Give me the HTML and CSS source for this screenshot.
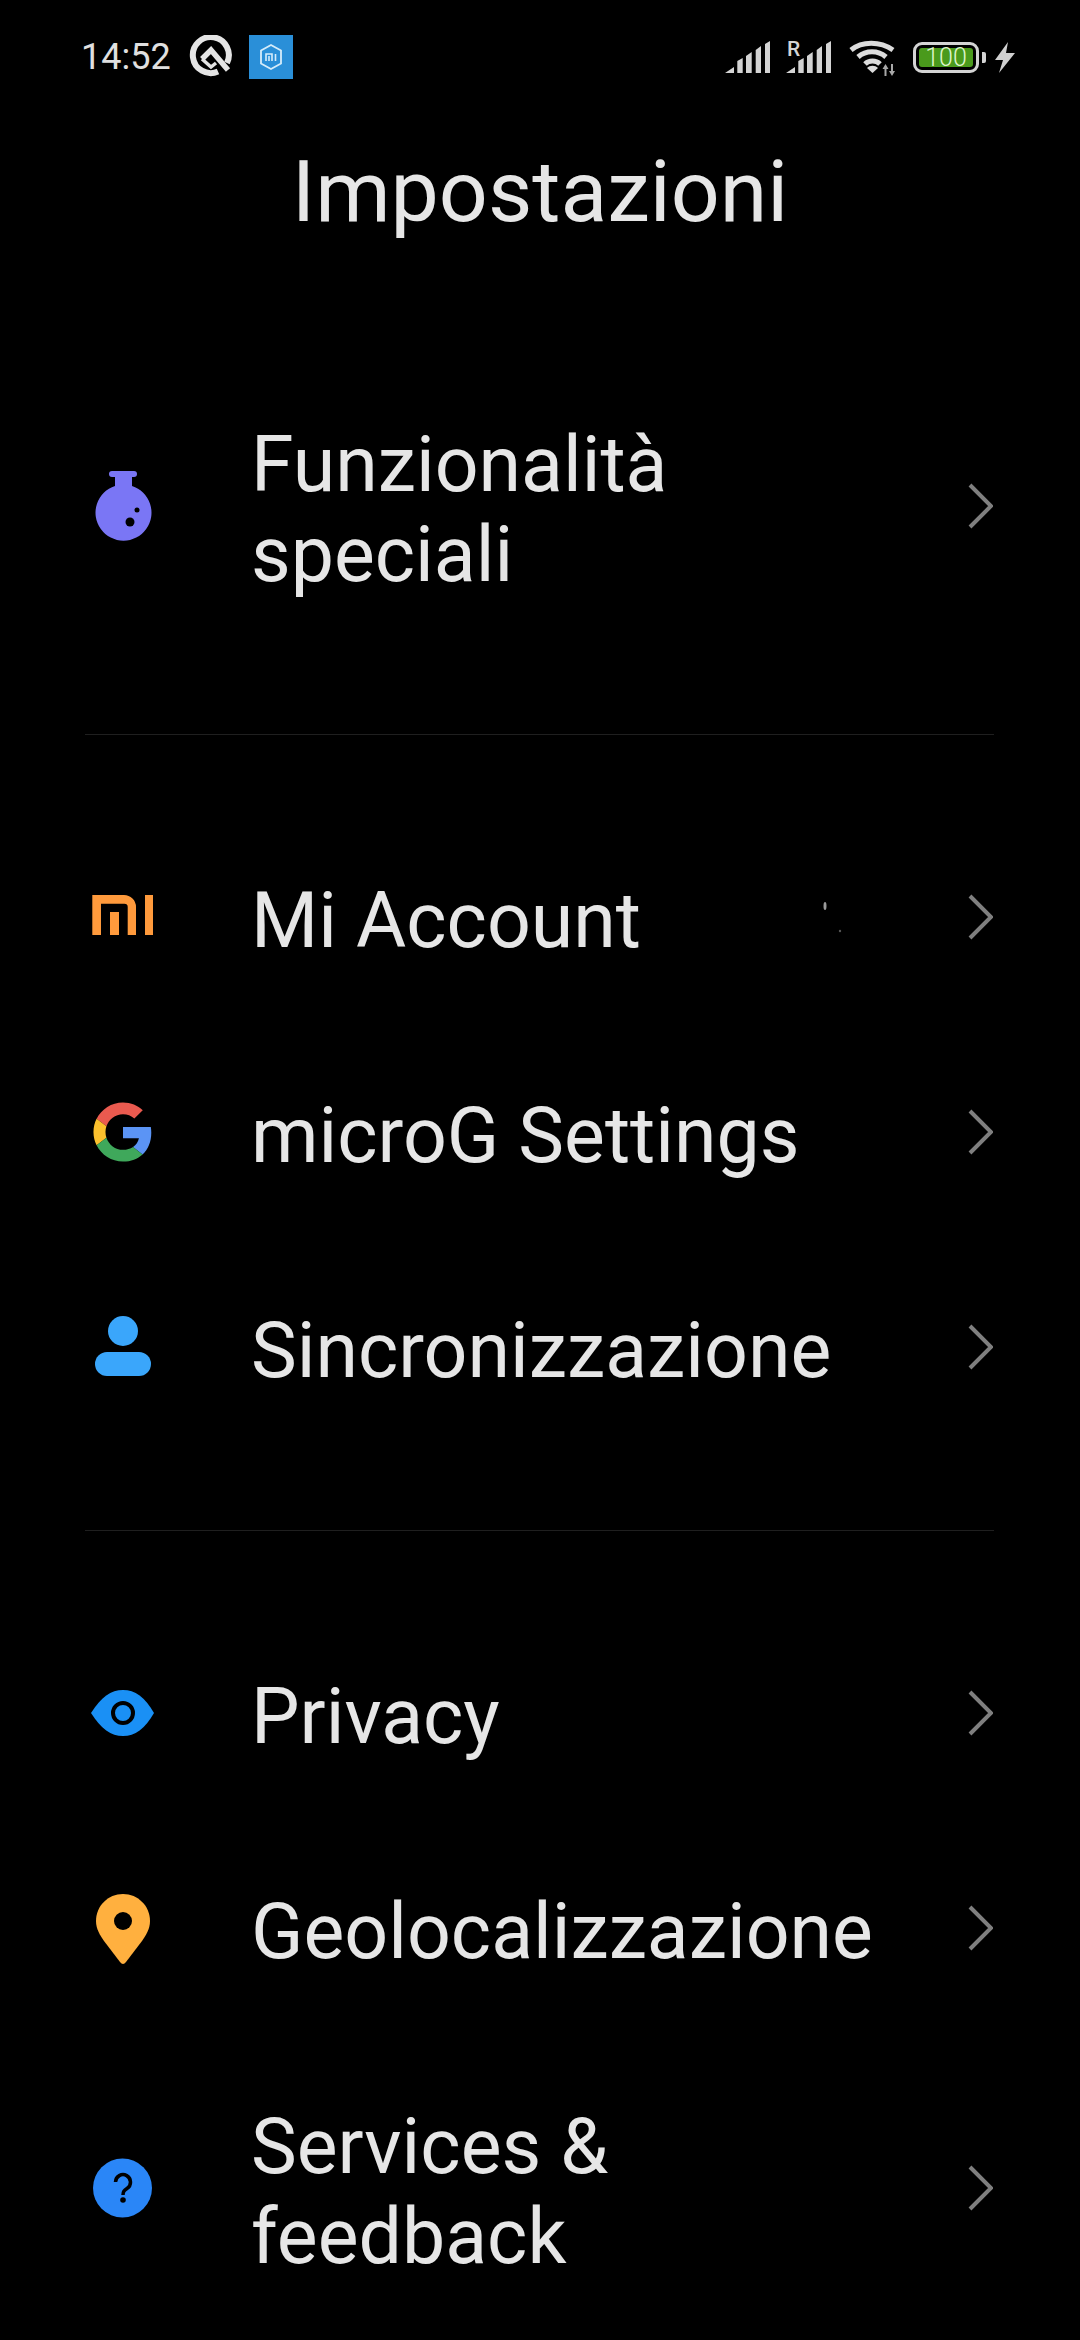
FILE: index.html
```html
<!DOCTYPE html>
<html lang="it">
<head>
  <meta charset="UTF-8">
  <title>Impostazioni</title>
  <link rel="stylesheet" href="styles.css">
</head>
<body>

  <div class="status-bar">
    <div class="status-left">
      <span class="clock">14:52</span>
      <svg class="q-icon" width="44" height="44" viewBox="0 0 44 44">
        <path d="M29 36.600 A18 18 0 1 1 38 28" fill="none" stroke="#e4e4e4" stroke-width="6"/>
        <path d="M13 24 L22 15 L39 35" fill="none" stroke="#e4e4e4" stroke-width="5.500"/>
        <path d="M13 24 L22 32 L27 28" fill="none" stroke="#e4e4e4" stroke-width="3.500"/>
      </svg>
      <div class="mi-badge">
        <svg width="24" height="28" viewBox="0 0 24 28">
          <path d="M12 2 L22 7.500 V20.500 L12 26 L2 20.500 V7.500 Z" fill="none" stroke="#d5ecfa" stroke-width="1.800"/>
          <path d="M7 18 V11 H13 V18 M10 13 V18 M16.500 11 V18" fill="none" stroke="#d5ecfa" stroke-width="1.600"/>
        </svg>
      </div>
    </div>
    <div class="status-right">
      <svg class="signal" width="45" height="32" viewBox="0 0 45 32">
        <path d="M0 32 L9 26 V32 Z M12.300 32 V20 L17.700 17 V32 Z M21 32 V15 L26.700 11 V32 Z M30.700 32 V9 L36 5 V32 Z M40 32 V3 L45 0 V32 Z" fill="#d4d4d4"/>
      </svg>
      <div class="signal-roaming">
        <span class="roaming">R</span>
        <svg class="signal" width="45" height="32" viewBox="0 0 45 32">
          <path d="M0 32 L9 26 V32 Z M12.300 32 V20 L17.700 17 V32 Z M21 32 V15 L26.700 11 V32 Z M30.700 32 V9 L36 5 V32 Z M40 32 V3 L45 0 V32 Z" fill="#d4d4d4"/>
        </svg>
      </div>
      <svg class="wifi" width="48" height="38" viewBox="0 0 48 38">
        <path d="M2 12 C13 3 31 3 44 12 M9 19 C17 12 29 12 37 19 M16 26 C20 22 27 22 31 26" fill="none" stroke="#dcdcdc" stroke-width="5"/>
        <path d="M23.500 35 L18 30 C21 27 26 27 29 30 Z" fill="#dcdcdc"/>
        <path d="M36.500 26 L33.500 31 H35.500 V38 H37.500 V31 H39.500 Z M43 38 L40 33 H42 V26 H44 V33 H46 Z" fill="#a8a8a8"/>
      </svg>
      <div class="battery">
        <div class="battery-body"><span class="battery-level">100</span></div>
        <div class="battery-nub"></div>
      </div>
      <svg class="bolt" width="20" height="31" viewBox="0 0 20 31">
        <path d="M13 0 L0 18 H8 L4 31 L20 11 H11 Z" fill="#d0d0d0"/>
      </svg>
    </div>
  </div>

  <h1 class="page-title">Impostazioni</h1>

  <div class="section first">
    <div class="row two-line">
      <svg class="row-icon" viewBox="0 0 64 72">
        <path d="M21 1 H43 A3 3 0 0 1 43 7 H41 V16 A28 28 0 1 1 24 16 V7 H21 A3 3 0 0 1 21 1 Z" fill="#7a76f5"/>
        <circle cx="39" cy="52" r="4.500" fill="#000"/>
        <circle cx="46" cy="40" r="2.500" fill="#000"/>
      </svg>
      <span class="row-label">Funzionalità speciali</span>
      <svg class="chevron" viewBox="0 0 25 46"><path d="M2 2 L23 23 L2 44"/></svg>
    </div>
  </div>

  <div class="divider"></div>

  <div class="section">
    <div class="row">
      <svg class="row-icon" viewBox="0 0 64 72">
        <path d="M1.300 14 H33 A12 12 0 0 1 45 26 V54 H36.700 V26 A3.300 3.300 0 0 0 33.400 22.700 H10 V54 H1.300 Z" fill="#ff9a3c"/>
        <path d="M19 31 H28 V54 H19 Z" fill="#ff9a3c"/>
        <path d="M54 14 H62 V54 H54 Z" fill="#ff9a3c"/>
      </svg>
      <span class="row-label">Mi Account</span>
      <svg class="specks" width="20" height="34" viewBox="0 0 20 34">
        <ellipse cx="2" cy="5" rx="1.500" ry="4" fill="#9a9a9a"/>
        <circle cx="17" cy="30" r="1.200" fill="#555"/>
      </svg>
      <svg class="chevron" viewBox="0 0 25 46"><path d="M2 2 L23 23 L2 44"/></svg>
    </div>
    <div class="row">
      <svg class="row-icon" viewBox="-2 -5 52 58">
        <path d="M24 9.500c3.540 0 6.710 1.220 9.210 3.600l6.850-6.850C35.900 2.380 30.470 0 24 0 14.620 0 6.510 5.380 2.560 13.220l7.980 6.190C12.430 13.720 17.740 9.500 24 9.500z" fill="#ea5a4f"/>
        <path d="M46.980 24.550c0-1.570-.15-3.090-.38-4.550H24v9.020h12.940c-.58 2.960-2.260 5.480-4.780 7.180l7.730 6c4.510-4.180 7.090-10.360 7.090-17.650z" fill="#5b94f5"/>
        <path d="M10.530 28.590c-.48-1.450-.76-2.990-.76-4.590s.27-3.140.76-4.590l-7.980-6.190C.92 16.460 0 20.120 0 24c0 3.880.92 7.540 2.560 10.780l7.970-6.190z" fill="#fbc02d"/>
        <path d="M24 48c6.480 0 11.930-2.130 15.890-5.810l-7.730-6c-2.150 1.450-4.920 2.300-8.160 2.300-6.260 0-11.570-4.220-13.470-9.910l-7.980 6.190C6.510 42.620 14.620 48 24 48z" fill="#3fa85b"/>
      </svg>
      <span class="row-label">microG Settings</span>
      <svg class="chevron" viewBox="0 0 25 46"><path d="M2 2 L23 23 L2 44"/></svg>
    </div>
    <div class="row">
      <svg class="row-icon" viewBox="0 0 64 72">
        <circle cx="32" cy="20" r="15" fill="#3aa6fb"/>
        <rect x="4" y="41" width="56" height="24" rx="12" fill="#3aa6fb"/>
      </svg>
      <span class="row-label">Sincronizzazione</span>
      <svg class="chevron" viewBox="0 0 25 46"><path d="M2 2 L23 23 L2 44"/></svg>
    </div>
  </div>

  <div class="divider"></div>

  <div class="section">
    <div class="row">
      <svg class="row-icon" viewBox="0 0 64 72">
        <path d="M0 36 C10 20 20 13 32 13 C44 13 54 20 63 36 C54 52 44 59 32 59 C20 59 10 52 0 36 Z" fill="#1a90f5"/>
        <circle cx="32" cy="36" r="10" fill="none" stroke="#000" stroke-width="4"/>
      </svg>
      <span class="row-label">Privacy</span>
      <svg class="chevron" viewBox="0 0 25 46"><path d="M2 2 L23 23 L2 44"/></svg>
    </div>
    <div class="row">
      <svg class="row-icon" viewBox="0 0 64 72">
        <path d="M32 2 C47 2 59 14 59 29 C59 37 55 43 51 49 L35 70 C33 72.500 31 72.500 29 70 L13 49 C9 43 5 37 5 29 C5 14 17 2 32 2 Z" fill="#ffb03f"/>
        <circle cx="32" cy="29" r="9" fill="#000"/>
      </svg>
      <span class="row-label">Geolocalizzazione</span>
      <svg class="chevron" viewBox="0 0 25 46"><path d="M2 2 L23 23 L2 44"/></svg>
    </div>
    <div class="row two-line">
      <svg class="row-icon" viewBox="0 0 64 72">
        <circle cx="31.500" cy="36" r="29.500" fill="#2a86f7"/>
        <path d="M24.500 30 A7.500 7.500 0 1 1 36 36.500 C33 38.500 32 39.500 32 43" fill="none" stroke="#000" stroke-width="3.500"/>
        <circle cx="32" cy="48" r="2.800" fill="#000"/>
      </svg>
      <span class="row-label">Services &amp; feedback</span>
      <svg class="chevron" viewBox="0 0 25 46"><path d="M2 2 L23 23 L2 44"/></svg>
    </div>
  </div>

</body>
</html>
```

FILE: styles.css
```css
body {
  margin: 0;
  width: 1080px;
  height: 2340px;
  overflow: hidden;
  background-color: #000;
  font-family: Roboto, 'Noto Sans', sans-serif;
  color: #e6e6e6;
}

.status-bar {
  display: flex;
  justify-content: space-between;
  align-items: center;
  height: 44px;
  padding: 35px 65px 0 81px;
}

.status-left {
  display: flex;
  align-items: center;
}

.clock {
  font-size: 36px;
  color: #e0e0e0;
}

.q-icon {
  margin-left: 18px;
}

.mi-badge {
  display: flex;
  justify-content: center;
  align-items: center;
  width: 44px;
  height: 44px;
  margin-left: 16px;
  background-color: #2a8fd8;
}

.status-right {
  display: flex;
  align-items: center;
}

.signal-roaming {
  position: relative;
  margin-left: 16px;
}

.signal-roaming .signal {
  display: block;
}

.roaming {
  position: absolute;
  left: 1px;
  top: 0;
  font-size: 21px;
  font-weight: 500;
  line-height: 16px;
  color: #d4d4d4;
}

.wifi {
  margin-left: 18px;
}

.battery {
  display: flex;
  align-items: center;
  margin-left: 16px;
}

.battery-body {
  display: flex;
  box-sizing: border-box;
  width: 66px;
  height: 31px;
  padding: 3px;
  border: 3px solid #d4d4d4;
  border-radius: 9px;
}

.battery-level {
  flex: 1;
  background-color: #4a9a1c;
  border-radius: 3px;
  color: #dff5cf;
  font-size: 25px;
  font-weight: 300;
  line-height: 19px;
  text-align: center;
}

.battery-nub {
  width: 4px;
  height: 11px;
  margin-left: 3px;
  background-color: #d4d4d4;
  border-radius: 0 2px 2px 0;
}

.bolt {
  margin-left: 9px;
}

.page-title {
  margin: 0;
  padding-top: 63px;
  font-size: 86px;
  font-weight: 400;
  line-height: 100px;
  text-align: center;
  color: #e6e6e6;
}

.section.first {
  margin-top: 111px;
}

.row {
  position: relative;
  display: flex;
  align-items: center;
  height: 215px;
  padding: 0 87px 0 91px;
}

.row.two-line {
  height: 305px;
}

.row-icon {
  flex: none;
  width: 64px;
  height: 72px;
}

.row-label {
  width: 640px;
  margin-left: 96px;
  padding-top: 8px;
  font-size: 77px;
  line-height: 90px;
}

.chevron {
  flex: none;
  width: 25px;
  height: 46px;
  margin-left: auto;
  fill: none;
  stroke: #7f7f7f;
  stroke-width: 4;
}

.specks {
  position: absolute;
  left: 823px;
  top: 92px;
}

.divider {
  height: 1px;
  margin: 76px 86px 74px 85px;
  background-color: #1f1f1f;
}
```
